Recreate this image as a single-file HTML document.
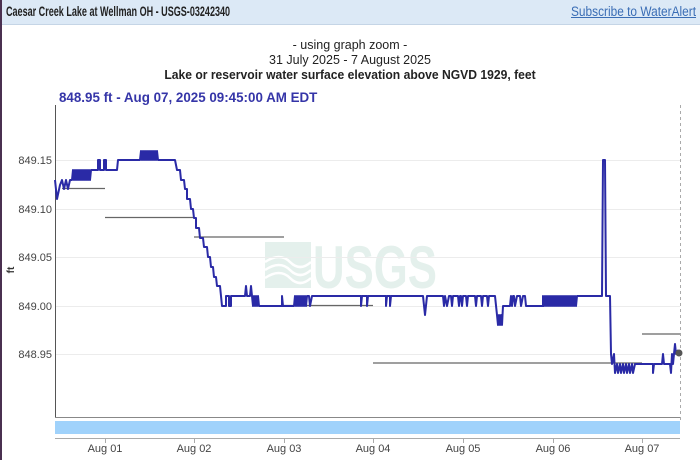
<!DOCTYPE html>
<html><head><meta charset="utf-8"><style>
html,body{margin:0;padding:0;background:#fff;width:700px;height:460px;overflow:hidden;font-family:"Liberation Sans",sans-serif}
.hdr{position:absolute;left:0;top:0;width:700px;height:24px;background:#dce9f6;border-bottom:1px solid #c5d5e6}
.hdr b{position:absolute;left:6px;top:4px;font-size:13.5px;color:#222;white-space:nowrap;transform:scaleX(0.67);transform-origin:0 0}
.hdr a{position:absolute;left:571px;top:4px;font-size:13.5px;color:#3a6db5;text-decoration:underline;white-space:nowrap;transform:scaleX(0.88);transform-origin:0 0}
.lb{position:absolute;left:0;top:0;width:2px;height:460px;background:#4a3050}
.t{position:absolute;left:0;width:700px;text-align:center;font-size:12.5px;color:#222}
</style></head><body>
<div class="hdr"><b>Caesar Creek Lake at Wellman OH - USGS-03242340</b><a>Subscribe to WaterAlert</a></div>
<div class="lb"></div>
<div class="t" style="top:38px">- using graph zoom -</div>
<div class="t" style="top:53px">31 July 2025 - 7 August 2025</div>
<div class="t" style="top:68px;font-weight:bold;transform:scaleX(0.97)">Lake or reservoir water surface elevation above NGVD 1929, feet</div>
<div style="position:absolute;left:59px;top:89px;font-size:14px;font-weight:bold;color:#3535a8;white-space:nowrap;transform:scaleX(0.955);transform-origin:0 0">848.95 ft - Aug 07, 2025 09:45:00 AM EDT</div>
<svg width="700" height="460" style="position:absolute;left:0;top:0" font-family="Liberation Sans,sans-serif">
<g fill="#e4f0ec">
<rect x="265" y="242" width="46" height="46"/>
<text x="313" y="288" font-size="60" font-weight="bold" textLength="124" lengthAdjust="spacingAndGlyphs">USGS</text>
</g>
<g fill="none" stroke="#fff" stroke-width="2.5"><path d="M265,262 Q280,252 290,262 T311,262"/><path d="M265,270 Q280,260 290,270 T311,270"/><path d="M265,278 Q280,268 290,278 T311,278"/></g>
<g stroke="#ececec" stroke-width="1">
<line x1="56" y1="160.5" x2="680" y2="160.5"/><line x1="56" y1="209.5" x2="680" y2="209.5"/>
<line x1="56" y1="257.5" x2="680" y2="257.5"/><line x1="56" y1="306.5" x2="680" y2="306.5"/>
<line x1="56" y1="354.5" x2="680" y2="354.5"/>
</g>
<line x1="55.5" y1="105" x2="55.5" y2="418" stroke="#555"/>
<line x1="55" y1="417.5" x2="680" y2="417.5" stroke="#888"/>
<line x1="680.5" y1="105" x2="680.5" y2="420" stroke="#aaa" stroke-dasharray="3,3"/>
<rect x="55" y="421" width="625" height="13" fill="#a0d2fb"/>
<line x1="55" y1="438.5" x2="680" y2="438.5" stroke="#aaa"/>
<g stroke="#aaa"><line x1="105.5" y1="438" x2="105.5" y2="443"/><line x1="194.5" y1="438" x2="194.5" y2="443"/><line x1="284.5" y1="438" x2="284.5" y2="443"/><line x1="373.5" y1="438" x2="373.5" y2="443"/><line x1="463.5" y1="438" x2="463.5" y2="443"/><line x1="553.5" y1="438" x2="553.5" y2="443"/><line x1="642.5" y1="438" x2="642.5" y2="443"/></g>
<g font-size="11" fill="#444" text-anchor="middle"><text x="105" y="452">Aug 01</text><text x="194" y="452">Aug 02</text><text x="284" y="452">Aug 03</text><text x="373" y="452">Aug 04</text><text x="463" y="452">Aug 05</text><text x="553" y="452">Aug 06</text><text x="642" y="452">Aug 07</text></g>
<g font-size="11" fill="#444" text-anchor="end"><text x="52" y="164">849.15</text><text x="52" y="213">849.10</text><text x="52" y="261">849.05</text><text x="52" y="310">849.00</text><text x="52" y="358">848.95</text></g>
<text x="14" y="270" font-size="10" fill="#333" font-weight="bold" transform="rotate(-90 14 270)" text-anchor="middle">ft</text>
<g stroke="#666" stroke-width="1.3">
<line x1="62" y1="188.5" x2="105" y2="188.5"/><line x1="105" y1="217.5" x2="194" y2="217.5"/><line x1="194" y1="237" x2="284" y2="237"/><line x1="284" y1="305.5" x2="373" y2="305.5"/><line x1="373" y1="363" x2="642" y2="363"/><line x1="642" y1="334" x2="680" y2="334"/>
</g>
<path fill="none" stroke="#2a2aa6" stroke-width="2" stroke-linejoin="round" d="M55,180 L57,199 L60,185 L62,180 L64,189 L66,180 L68,189 L70,180 L72,180 L73,170 L74,180 L75,170 L76,180 L77,170 L78,180 L79,170 L80,180 L81,170 L82,180 L83,170 L84,180 L85,170 L86,180 L87,170 L88,180 L89,170 L90,180 L91,170 L98,170 L98,160 L100,160 L100,170 L104,170 L104,160 L106,160 L106,170 L117,170 L118,160 L140,160 L141,151 L142,160 L143,151 L144,160 L145,151 L146,160 L147,151 L148,160 L149,151 L150,160 L151,151 L152,160 L153,151 L154,160 L155,151 L156,160 L157,151 L158,160 L175,160 L177,170 L180,170 L181,180 L184,180 L185,189 L187,189 L187,199 L190,199 L191,209 L193,209 L194,218 L196,218 L196,228 L199,228 L200,238 L203,238 L204,247 L207,247 L208,257 L210,257 L211,267 L213,267 L214,277 L216,277 L217,286 L220,286 L221,296 L222,306 L226,306 L226,296 L229,296 L229,306 L231,306 L231,296 L245,296 L246,286 L247,296 L250,296 L251,286 L252,296 L253,306 L254,296 L255,306 L256,296 L257,306 L258,296 L259,306 L282,306 L282,296 L283,306 L294,306 L295,296 L296,306 L297,296 L298,306 L299,296 L300,306 L301,296 L302,306 L303,296 L304,306 L305,296 L306,306 L307,296 L309,296 L310,306 L312,296 L361,296 L361,306 L362,296 L367,296 L367,306 L368,296 L386,296 L386,306 L387,296 L390,296 L390,306 L391,296 L423,296 L425,315 L427,296 L443,296 L444,306 L445,296 L447,306 L449,296 L451,296 L452,306 L453,296 L458,296 L459,306 L460,296 L461,296 L462,306 L463,296 L466,296 L467,306 L468,296 L475,296 L476,306 L477,296 L481,296 L482,306 L483,296 L487,296 L488,306 L489,296 L495,296 L497,315 L498,325 L499,315 L500,325 L501,315 L502,325 L503,306 L510,306 L511,296 L512,306 L513,296 L514,296 L515,306 L517,296 L520,296 L521,306 L523,296 L525,296 L526,306 L530,306 L543,306 L543,296 L544,306 L545,296 L546,306 L547,296 L548,306 L549,296 L550,306 L551,296 L552,306 L553,296 L554,306 L555,296 L556,306 L557,296 L558,306 L559,296 L560,306 L561,296 L562,306 L563,296 L564,306 L565,296 L566,306 L567,296 L568,306 L569,296 L570,306 L571,296 L572,306 L573,296 L574,306 L575,296 L576,306 L577,296 L602,296 L603,160 L605,160 L606,296 L610,296 L611,354 L612,364 L614,354 L615,373 L617,364 L618,373 L620,364 L621,373 L623,364 L624,373 L626,364 L627,373 L629,364 L630,373 L632,364 L633,373 L635,364 L653,364 L653,373 L654,364 L662,364 L663,354 L664,364 L670,364 L671,373 L672,354 L673,364 L674,354 L675,344 L676,354 L678,350"/>
<circle cx="679" cy="353" r="3.5" fill="#555"/>
</svg>
</body></html>
